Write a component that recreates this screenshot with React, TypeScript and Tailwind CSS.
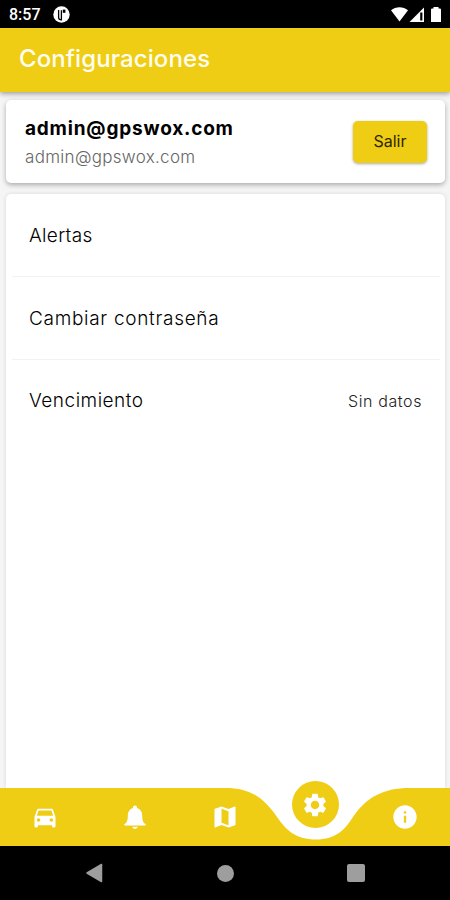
import type { ComponentType } from 'react';
import { MdDirectionsCar, MdInfo, MdMap, MdSettings } from 'react-icons/md';

interface SettingsRow {
  label: string;
  value?: string;
  labelClass: string;
}

interface NavItem {
  id: string;
  icon: ComponentType<{ className?: string }>;
}

const user = {
  name: 'admin@gpswox.com',
  email: 'admin@gpswox.com',
};

const rows: SettingsRow[] = [
  { label: 'Alertas', labelClass: 'tracking-[0.3px] pt-0.5' },
  { label: 'Cambiar contraseña', labelClass: 'tracking-[0.7px] pt-0.5' },
  { label: 'Vencimiento', value: 'Sin datos', labelClass: 'tracking-[0.5px]' },
];

function BellIcon({ className }: { className?: string }) {
  return (
    <svg className={className} viewBox="0 0 28 28" fill="currentColor">
      <path d="M14 2.5c1.2 0 2 .9 2 2v.5c3.3 1 5.2 3.8 5.2 7.4 0 4.800.9 7.200 3.300 8.700.6.400.4 1.400-.4 1.400H3.900c-.8 0-1-1-.4-1.400 2.400-1.500 3.300-3.900 3.300-8.700C6.800 8.800 8.700 6 12 5v-.5c0-1.100.8-2 2-2z" />
      <path d="M11.400 23.700h5.200c-.2 1.400-1.200 2.200-2.600 2.200s-2.400-.8-2.600-2.200z" />
    </svg>
  );
}

const navItems: NavItem[] = [
  { id: 'vehicles', icon: MdDirectionsCar },
  { id: 'alerts', icon: BellIcon },
  { id: 'map', icon: MdMap },
  { id: 'settings', icon: MdSettings },
  { id: 'info', icon: MdInfo },
];

function StatusBar() {
  return (
    <div className="flex h-7 shrink-0 items-center justify-between bg-black pl-[9px] pr-2">
      <div className="flex items-center gap-3">
        <span className="pt-0.5 font-[Roboto,sans-serif] text-base font-medium leading-none text-white">8:57</span>
        <svg className="h-[17px] w-[17px]" viewBox="0 0 17 17">
          <circle cx="8.5" cy="8.5" r="8.2" fill="#fff" />
          <path d="M5.6 4v7.2c0 1.7 1.2 2.6 2.8 2.6V4.2" fill="none" stroke="#000" strokeWidth="1.3" />
          <path d="M9.8 3.6h2.6v3.2H9.8z" fill="#000" />
        </svg>
      </div>
      <svg className="h-[17px] w-[51px]" viewBox="0 0 51 17">
        <path d="M0 4.2C4.8.2 12.2.2 17 4.2L8.5 15.5z" fill="#fff" />
        <path d="M33 1.5V16H18.5z" fill="#fff" />
        <path d="M29.2 6.5h2.2v8h-2.2z" fill="#000" />
        <path d="M42.5 1h5v1.5h1.2c.8 0 1.3.5 1.3 1.3V16H40V3.8c0-.8.5-1.3 1.3-1.3h1.2z" fill="#fff" />
      </svg>
    </div>
  );
}

function BottomNav() {
  return (
    <nav className="relative h-[58px] shrink-0">
      <svg className="absolute inset-0 h-[58px] w-full" viewBox="0 0 450 58" preserveAspectRatio="none">
        <path
          d="M0 0H225C250 0 263 9 277 29C287 43 296 51.5 316 51.5C335 51.5 344 43 353 29C366 10 382 0 410 0H450V58H0z"
          fill="#efcd14"
        />
      </svg>
      <div className="relative grid h-full grid-cols-5 grid-rows-1">
        {navItems.map(({ id, icon: Icon }) => (
          <button key={id} type="button" className="flex min-h-0 items-center justify-center text-white">
            {id === 'settings' ? (
              <span className="mb-[25px] flex h-[47px] w-[47px] shrink-0 items-center justify-center rounded-full bg-[#efcd14]">
                <Icon className="h-7 w-7" />
              </span>
            ) : (
              <Icon className="h-7 w-7" />
            )}
          </button>
        ))}
      </div>
    </nav>
  );
}

function SystemNav() {
  return (
    <div className="flex h-[54px] shrink-0 items-center justify-between bg-black px-[85px]">
      <svg className="h-5 w-[18px]" viewBox="0 0 18 20">
        <path d="M16.5 1.5v17L2 10z" fill="#9e9e9e" stroke="#9e9e9e" strokeWidth="1.5" strokeLinejoin="round" />
      </svg>
      <span className="h-[17px] w-[17px] rounded-full bg-[#9e9e9e]" />
      <span className="h-[18px] w-[18px] rounded-xs bg-[#9e9e9e]" />
    </div>
  );
}

export default function App() {
  return (
    <div className="flex h-[900px] w-[450px] flex-col overflow-hidden bg-white font-[Inter,sans-serif] text-black">
      <StatusBar />

      <header className="z-10 flex h-16 shrink-0 items-center bg-[#efcd14] pb-0.5 pl-[19px] shadow-[0_2px_5px_rgba(0,0,0,0.35)]">
        <h1 className="text-2xl font-medium tracking-[0.1px] text-[#fffdf0]">Configuraciones</h1>
      </header>

      <main className="flex min-h-0 flex-1 flex-col gap-[11px] overflow-hidden bg-[#f5f5f5] pl-1.5 pr-[5px] pt-2">
        <section className="flex h-[83px] shrink-0 items-center justify-between rounded-[5px] bg-white pl-[19px] pr-[18px] shadow-[0_2px_5px_rgba(0,0,0,0.3)]">
          <div className="pt-0.5">
            <p className="text-[19px] font-bold leading-7 tracking-[0.8px]">{user.name}</p>
            <p className="text-[17px] font-light leading-7 tracking-[0.3px] text-[#666]">{user.email}</p>
          </div>
          <button
            type="button"
            className="h-[42px] w-[74px] rounded-[5px] bg-[#efcd14] pb-0.5 text-base text-[#2e2700] shadow-[0_1px_3px_rgba(0,0,0,0.35)]"
          >
            Salir
          </button>
        </section>

        <section className="flex-1 rounded-t-[5px] bg-white pl-1.5 pr-[5px] shadow-[0_0_4px_rgba(0,0,0,0.12)]">
          <ul className="divide-y divide-[#f2f2f2]">
            {rows.map((row) => (
              <li key={row.label} className="flex h-[83px] items-center justify-between pl-[17px] pr-[18px]">
                <span className={`text-[19px] font-light ${row.labelClass}`}>{row.label}</span>
                {row.value && (
                  <span className="pb-0.5 text-base font-light tracking-[0.6px] text-[#222]">{row.value}</span>
                )}
              </li>
            ))}
          </ul>
        </section>
      </main>

      <BottomNav />
      <SystemNav />
    </div>
  );
}
